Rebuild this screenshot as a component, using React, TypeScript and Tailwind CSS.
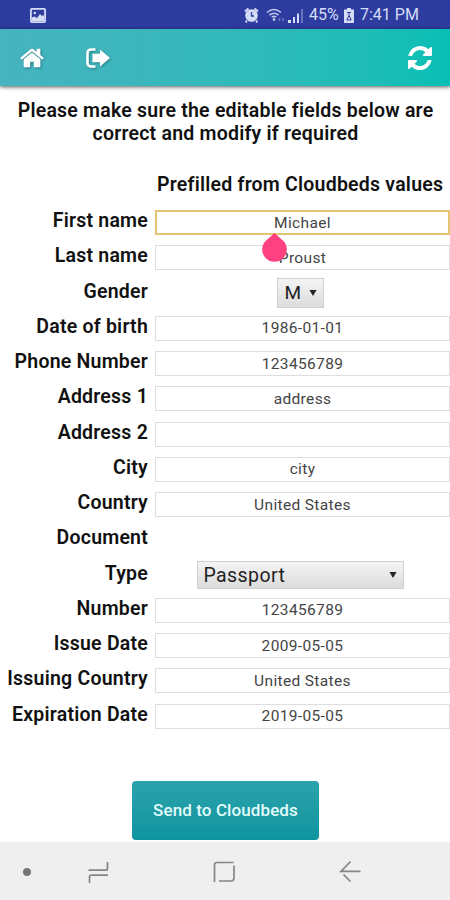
import { clsx } from 'clsx'

interface Field {
  label: string
  value?: string
  kind: 'text' | 'select' | 'none'
  focused?: boolean
  wide?: boolean
}

const fields: Field[] = [
  { label: 'First name', value: 'Michael', kind: 'text', focused: true },
  { label: 'Last name', value: 'Proust', kind: 'text' },
  { label: 'Gender', value: 'M', kind: 'select' },
  { label: 'Date of birth', value: '1986-01-01', kind: 'text' },
  { label: 'Phone Number', value: '123456789', kind: 'text' },
  { label: 'Address 1', value: 'address', kind: 'text' },
  { label: 'Address 2', value: '', kind: 'text' },
  { label: 'City', value: 'city', kind: 'text' },
  { label: 'Country', value: 'United States', kind: 'text' },
  { label: 'Document', kind: 'none' },
  { label: 'Type', value: 'Passport', kind: 'select', wide: true },
  { label: 'Number', value: '123456789', kind: 'text' },
  { label: 'Issue Date', value: '2009-05-05', kind: 'text' },
  { label: 'Issuing Country', value: 'United States', kind: 'text' },
  { label: 'Expiration Date', value: '2019-05-05', kind: 'text' },
]

function StatusBar() {
  return (
    <div className="flex h-[29px] items-center bg-[#2d3c9e] pt-px text-[#d5dcf8]">
      <svg className="ml-[30px] h-[15px] w-4" viewBox="0 0 16 15">
        <rect x="0.9" y="0.9" width="14.2" height="13.2" rx="1" fill="none" stroke="currentColor" strokeWidth="1.8" />
        <path d="M2 13V9.500l2.500-1L7 10l3-4 2 2 2-1v6z" fill="currentColor" />
        <circle cx="4.800" cy="5" r="1.300" fill="currentColor" />
      </svg>
      <svg className="ml-[198px] h-4 w-[15px]" viewBox="0 0 15 16">
        <path d="M1 4.500 4.500 1.500M14 4.500 10.500 1.500M3 14l-1.500 1M12 14l1.500 1" stroke="currentColor" strokeWidth="2.200" />
        <circle cx="7.500" cy="8.500" r="6.300" fill="currentColor" />
        <path d="M7.500 5v4H10" fill="none" stroke="#2d3c9e" strokeWidth="1.300" />
      </svg>
      <svg className="ml-[7px] h-4 w-5" viewBox="0 0 20 16">
        <g fill="none" stroke="currentColor" strokeWidth="1.600" opacity="0.85">
          <path d="M1 5.500q7-6 14 0" />
          <path d="M3.500 8q4.500-3.500 9 0" />
          <path d="M5.800 10.200q2.200-1.600 4.400 0" />
        </g>
        <circle cx="8" cy="12.500" r="1.300" fill="currentColor" />
        <path d="M13.500 11v3M17 11v3" stroke="currentColor" strokeWidth="1.400" opacity="0.4" />
      </svg>
      <svg className="ml-0.5 h-[15px] w-4" viewBox="0 0 16 15">
        <path d="M0 12h3v3H0zM5 9h2v6H5zM9 5.500h2V15H9z" fill="currentColor" />
        <path d="M13 1h2v14h-2z" fill="currentColor" opacity="0.35" />
      </svg>
      <span className="ml-[5px] w-[30px] text-[16px] whitespace-nowrap">45%</span>
      <svg className="ml-[5px] h-[15px] w-2.5" viewBox="0 0 10 15">
        <path d="M3 0h4v1.500h3V15H0V1.500h3z" fill="currentColor" />
        <path d="M3 4.500h4M5 4.500v3M2.800 12l2.200-4.500L7.200 12z" fill="none" stroke="#2d3c9e" strokeWidth="1" />
      </svg>
      <span className="ml-1.5 text-[16px] whitespace-nowrap">7:41 PM</span>
    </div>
  )
}

function Toolbar() {
  return (
    <div className="relative flex h-[57px] items-center bg-linear-to-r from-[#46b3bf] to-[#05bfb4] text-white shadow-[0_1px_4px_rgba(0,0,0,0.65)]">
      <svg className="ml-[19px] h-[26px] w-[26px] drop-shadow-[1px_1px_1px_rgba(0,0,0,0.3)]" viewBox="0 0 1792 1792" fill="currentColor">
        <path d="M1472 992v480q0 26-19 45t-45 19h-384v-384H768v384H384q-26 0-45-19t-19-45V992q0-1 .5-3t.5-3l575-474 575 474q1 2 1 6zm223-69-62 74q-8 9-21 11h-3q-13 0-21-7L896 424l-692 577q-12 8-24 7-13-2-21-11l-62-74q-8-10-7-23.500T101 878l719-599q32-26 76-26t76 26l244 204V288q0-14 9-23t23-9h192q14 0 23 9t9 23v408l219 182q10 8 11 21.500t-7 23.500z" />
      </svg>
      <svg className="ml-[41px] h-5 w-6 drop-shadow-[1px_1px_1px_rgba(0,0,0,0.3)]" viewBox="0 0 24 20" fill="currentColor">
        <path d="M9.500 1.500H5A3.500 3.500 0 0 0 1.500 5v10A3.500 3.500 0 0 0 5 18.500h4.500" fill="none" stroke="currentColor" strokeWidth="2.600" />
        <path d="M6.500 5.800h7.500V1.500L24 10 14 18.500v-4.300H6.500z" />
      </svg>
      <svg className="mr-[16px] ml-auto h-[28px] w-[28px]" viewBox="0 0 1792 1792" fill="currentColor">
        <path d="M1639 1056q0 5-1 7-64 268-268 434.500T892 1664q-146 0-282.500-55T366 1452l-129 129q-19 19-45 19t-45-19-19-45v-448q0-26 19-45t45-19h448q26 0 45 19t19 45-19 45l-137 137q71 66 161 102t187 36q134 0 250-65t186-179q11-17 53-117 8-23 30-23h192q13 0 22.500 9.500t9.500 22.500zm25-800v448q0 26-19 45t-45 19h-448q-26 0-45-19t-19-45 19-45l138-138Q1097 384 896 384q-134 0-250 65T460 628q-11 17-53 117-8 23-30 23H178q-13 0-22.500-9.500T146 736v-7q65-268 270-434.500T896 128q146 0 284 55.500T1425 340l130-129q19-19 45-19t45 19 19 45z" />
      </svg>
    </div>
  )
}

function FieldControl({ field }: { field: Field }) {
  if (field.kind === 'none') return null
  if (field.kind === 'select') {
    return (
      <div
        className={clsx(
          'mr-[5px] flex items-center justify-between border border-[#d0d0d0] bg-linear-to-b from-[#f4f4f4] to-[#dcdcdc] text-[#222]',
          field.wide
            ? 'h-[28px] w-[207px] pr-[6px] pl-1.5 text-[19.500px] tracking-[0.400px]'
            : 'h-[30px] w-[47px] pr-[6px] pl-[7px] text-[19px]'
        )}
      >
        <span>{field.value}</span>
        <svg className="h-[8px] w-[8px]" viewBox="0 0 9 8">
          <path d="M0.500 0.500h8L4.500 7.500z" fill="#222" />
        </svg>
      </div>
    )
  }
  return (
    <div
      className={clsx(
        'flex h-[25px] w-full items-center justify-center bg-white pt-px text-[15.500px] tracking-[0.350px] text-[#444]',
        field.focused ? 'border-2 border-[#e3c470]' : 'border border-[#dedede]'
      )}
    >
      {field.value}
    </div>
  )
}

function TouchHandle() {
  return (
    <svg className="absolute top-[28px] left-[107px] z-10 h-[29px] w-[25px]" viewBox="0 0 25 29">
      <path d="M12.500 0 21.400 8A12.300 12.300 0 1 1 3.600 8z" fill="#ff4081" />
    </svg>
  )
}

function NavBar() {
  return (
    <div className="flex h-[58px] items-center bg-[#efefef] pt-[2px] text-[#858585]">
      <div className="ml-[23px] h-2 w-2 rounded-full bg-[#777]" />
      <svg className="ml-[56px] h-6 w-6" viewBox="0 0 24 24" fill="none" stroke="currentColor" strokeWidth="1.700">
        <path d="M1.500 10.200H18.500q2 0 2-2V2M21 15.200H4.500q-2 0-2 2V23" />
      </svg>
      <svg className="ml-[101px] h-6 w-6" viewBox="0 0 24 24" fill="none" stroke="currentColor" strokeWidth="1.700">
        <path d="M21.500 2.500H5q-2.500 0-2.500 2.500v17M22 5.500v12.500q0 3-3 3H7" />
      </svg>
      <svg className="ml-[102px] h-6 w-6" viewBox="0 0 24 24" fill="none" stroke="currentColor" strokeWidth="1.700">
        <path d="M12.500 1.500 3 11.300h19.500M5.500 14.500l7 7" />
      </svg>
    </div>
  )
}

export default function App() {
  return (
    <div className="flex h-[900px] w-[450px] flex-col overflow-hidden bg-white font-['Roboto',sans-serif] text-[#111]">
      <StatusBar />
      <Toolbar />
      <main className="flex flex-1 flex-col">
        <h1 className="mt-[13px] mr-[-1px] text-center text-[19.500px] leading-[23px] font-[600] tracking-[0.220px]">
          Please make sure the editable fields below are
          <br />
          correct and modify if required
        </h1>
        <h2 className="mt-[28px] ml-[157px] text-[19.500px] leading-[23px] font-[600] tracking-[0.220px] whitespace-nowrap">
          Prefilled from Cloudbeds values
        </h2>
        <div className="mt-[9px]">
          {fields.map(field => (
            <div key={field.label} className="flex h-[35.250px]">
              <label className="mt-[4px] w-[148px] text-right text-[19.500px] leading-[23px] font-[600] tracking-[0.220px] whitespace-nowrap">
                {field.label}
              </label>
              <div className="relative ml-[7px] flex flex-1 items-center justify-center">
                <FieldControl field={field} />
                {field.focused && <TouchHandle />}
              </div>
            </div>
          ))}
        </div>
        <button className="mt-[47px] ml-[132px] h-[59px] w-[187px] rounded bg-linear-to-b from-[#2aa3ad] to-[#0d949e] text-[17px] font-medium tracking-[0.100px] text-[#e2fbfb]">
          Send to Cloudbeds
        </button>
      </main>
      <NavBar />
    </div>
  )
}
